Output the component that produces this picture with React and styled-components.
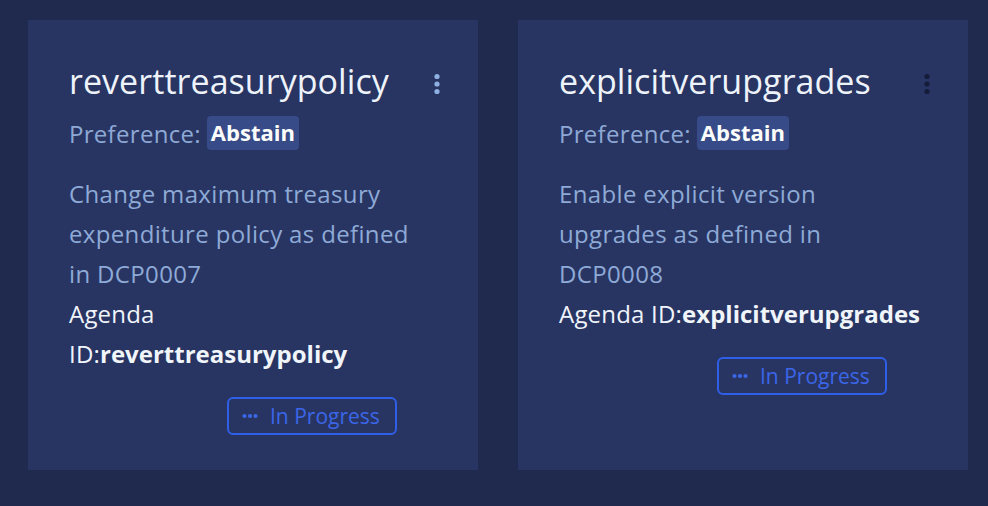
import React from "react";
import styled, { createGlobalStyle } from "styled-components";

const GlobalStyle = createGlobalStyle`
  html, body { margin: 0; padding: 0; }
  body {
    background: #1f2a4e;
    font-family: "Open Sans", "Noto Sans", sans-serif;
    -webkit-font-smoothing: antialiased;
  }
`;

const Page = styled.div`
  min-height: 506px;
  box-sizing: border-box;
  padding: 20px 20px 36px 28px;
  display: grid;
  grid-template-columns: repeat(2, 450px);
  column-gap: 40px;
  align-items: stretch;
  background: #1f2a4e;
`;

const Card = styled.section`
  background: #283563;
  padding: 38px 41px 35px 41px;
  box-sizing: border-box;
  display: flex;
  flex-direction: column;
  align-items: flex-start;
`;

const Header = styled.div`
  width: 100%;
  display: flex;
  justify-content: space-between;
  align-items: flex-start;
`;

const Title = styled.h2`
  margin: 0;
  font-size: 34px;
  line-height: 46px;
  font-weight: 400;
  color: #eef3fb;
  letter-spacing: 0.05px;
`;

const MenuButton = styled.button`
  border: 0;
  background: transparent;
  padding: 0;
  margin: 14px -12px 0 0;
  width: 24px;
  height: 24px;
  display: flex;
  color: ${(p) => (p.$dark ? "#141c3a" : "#8fb0e2")};
  cursor: pointer;
`;

const PrefRow = styled.div`
  margin-top: 12px;
  display: flex;
  align-items: center;
  gap: 6px;
  height: 34px;
  font-size: 24px;
  letter-spacing: 0.3px;
  color: #8ea9d5;
`;

const Badge = styled.span`
  background: #364b87;
  color: #ffffff;
  font-weight: 700;
  font-size: 22px;
  line-height: 30px;
  padding: 1px 4px 3px 4px;
  border-radius: 4px;
  letter-spacing: 0;
`;

const Description = styled.p`
  margin: 24px 0 0 0;
  width: 364px;
  font-size: 24px;
  line-height: 40px;
  letter-spacing: 0.35px;
  color: #8eaad6;
`;

const Agenda = styled.p`
  margin: 0;
  width: 368px;
  font-size: 24px;
  line-height: 40px;
  letter-spacing: 0.2px;
  color: #f0f4fb;

  strong {
    font-weight: 700;
    letter-spacing: 0;
  }
`;

const Status = styled.div`
  margin: 23px 0 0 158px;
  box-sizing: border-box;
  width: 170px;
  height: 38px;
  border: 2px solid #2f5fe6;
  border-radius: 6px;
  display: flex;
  align-items: center;
  padding: 0 0 0 13px;
  gap: 12px;
  color: #3b66e8;
  font-size: 21px;
  line-height: 1;
`;

const Kebab = () => (
  <svg width="24" height="24" viewBox="0 0 24 24">
    <circle cx="12" cy="4.5" r="2.6" fill="currentColor" />
    <circle cx="12" cy="12" r="2.6" fill="currentColor" />
    <circle cx="12" cy="19.5" r="2.6" fill="currentColor" />
  </svg>
);

const Dots = () => (
  <svg width="16" height="6" viewBox="0 0 16 6">
    <circle cx="2.5" cy="3" r="2.1" fill="currentColor" />
    <circle cx="8" cy="3" r="2.1" fill="currentColor" />
    <circle cx="13.5" cy="3" r="2.1" fill="currentColor" />
  </svg>
);

const items = [
  {
    id: "reverttreasurypolicy",
    desc: "Change maximum treasury expenditure policy as defined in DCP0007",
    dark: false,
  },
  {
    id: "explicitverupgrades",
    desc: "Enable explicit version upgrades as defined in DCP0008",
    dark: true,
  },
];

export default function App() {
  return (
    <>
      <GlobalStyle />
      <Page>
        {items.map((it) => (
          <Card key={it.id}>
            <Header>
              <Title>{it.id}</Title>
              <MenuButton $dark={it.dark} aria-label="menu">
                <Kebab />
              </MenuButton>
            </Header>
            <PrefRow>
              Preference: <Badge>Abstain</Badge>
            </PrefRow>
            <Description>{it.desc}</Description>
            <Agenda>
              Agenda ID:<strong>{it.id}</strong>
            </Agenda>
            <Status>
              <Dots />
              <span>In Progress</span>
            </Status>
          </Card>
        ))}
      </Page>
    </>
  );
}
